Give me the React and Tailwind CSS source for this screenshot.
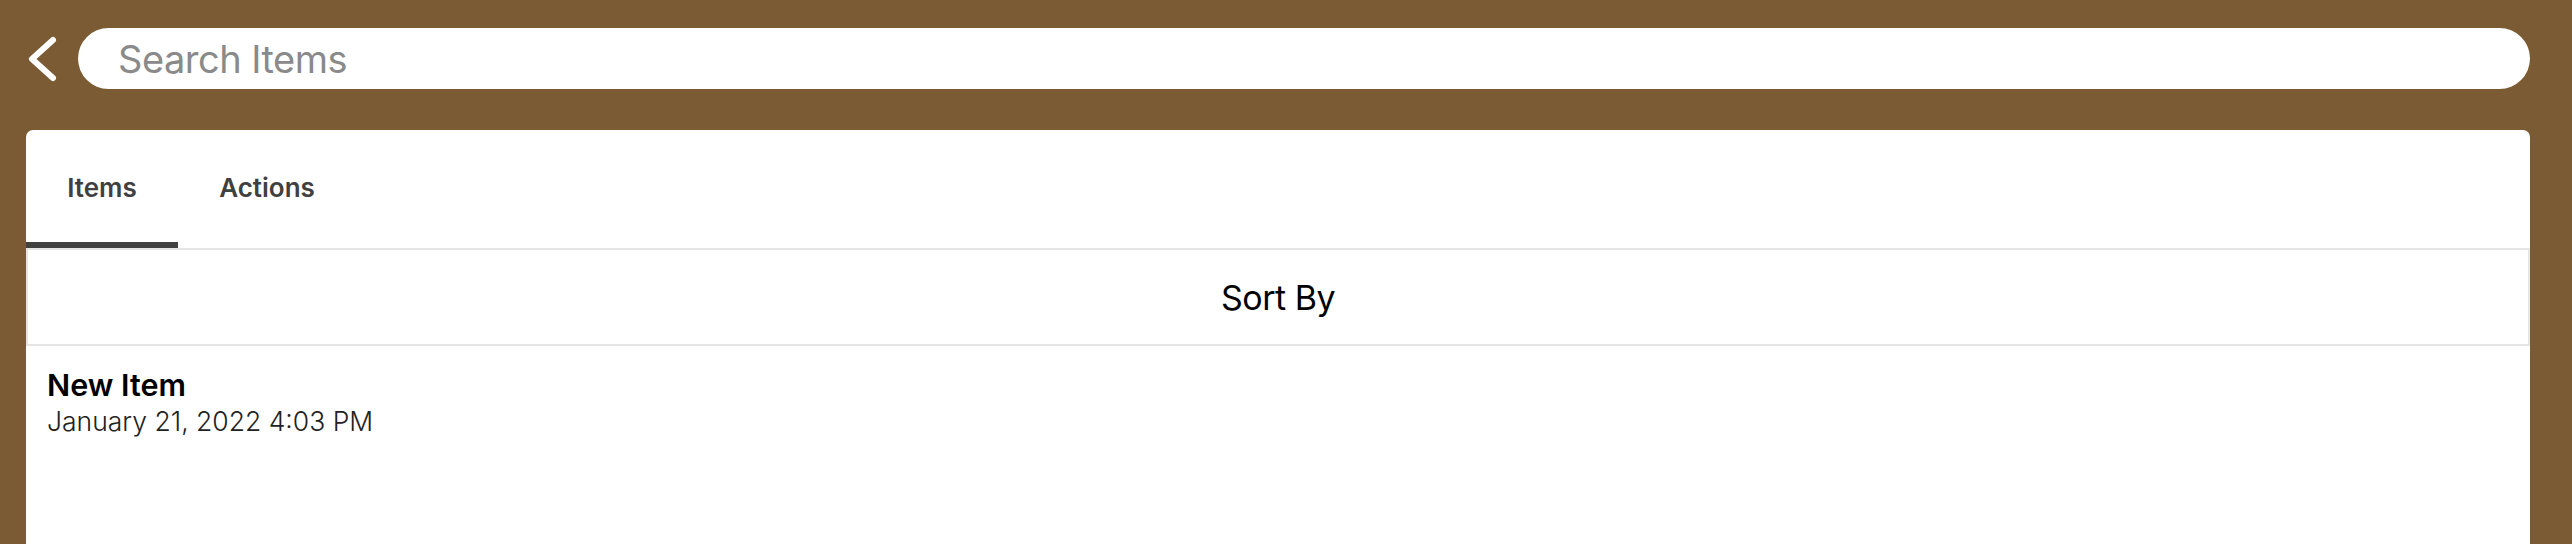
export default function App() {
  return (
    <div className="h-[544px] overflow-hidden bg-[#7b5b34] font-['Inter','Noto_Sans',sans-serif]">
      {/* Header */}
      <div className="flex items-center pl-[26px] pr-[42px] pt-[28px]">
        <button className="flex w-[52px] h-[61px] items-center">
          <svg width="32" height="48" viewBox="0 0 32 48" fill="none" className="ml-[1px]">
            <path d="M26 5 L5 24 L26 43" stroke="white" strokeWidth="6" strokeLinecap="round" strokeLinejoin="round" />
          </svg>
        </button>
        <div className="flex h-[61px] flex-1 items-center rounded-full bg-white pl-[40px]">
          <span className="text-[38px] leading-none tracking-[-0.5px] text-[#8a8a8a]">Search Items</span>
        </div>
      </div>

      {/* Card */}
      <div className="ml-[26px] mr-[42px] mt-[41px] h-[500px] rounded-t-[7px] bg-white">
        {/* Tabs */}
        <div className="flex border-b-2 border-[#e5e5e5]">
          <div className="flex w-[152px] flex-col">
            <div className="flex h-[112px] items-center justify-center pt-[2px] text-[26px] font-semibold text-[#404040]">Items</div>
            <div className="h-[6px] bg-[#404040]" />
          </div>
          <div className="flex w-[178px] flex-col">
            <div className="flex h-[112px] items-center justify-center pt-[2px] text-[26px] font-semibold text-[#404040]">Actions</div>
            <div className="h-[6px]" />
          </div>
        </div>

        {/* Sort By */}
        <div className="flex h-[96px] items-center justify-center border-x-2 border-b-2 border-[#e5e5e5]">
          <span className="text-[34px] tracking-[-0.5px] text-black">Sort By</span>
        </div>

        {/* Item */}
        <div className="pl-[21px] pt-[21px]">
          <p className="text-[30.5px] font-semibold leading-[35px] text-black">New Item</p>
          <p className="mt-[2px] text-[26.5px] font-light leading-[34px] text-[#222]">January 21, 2022 4:03 PM</p>
        </div>
      </div>
    </div>
  );
}
